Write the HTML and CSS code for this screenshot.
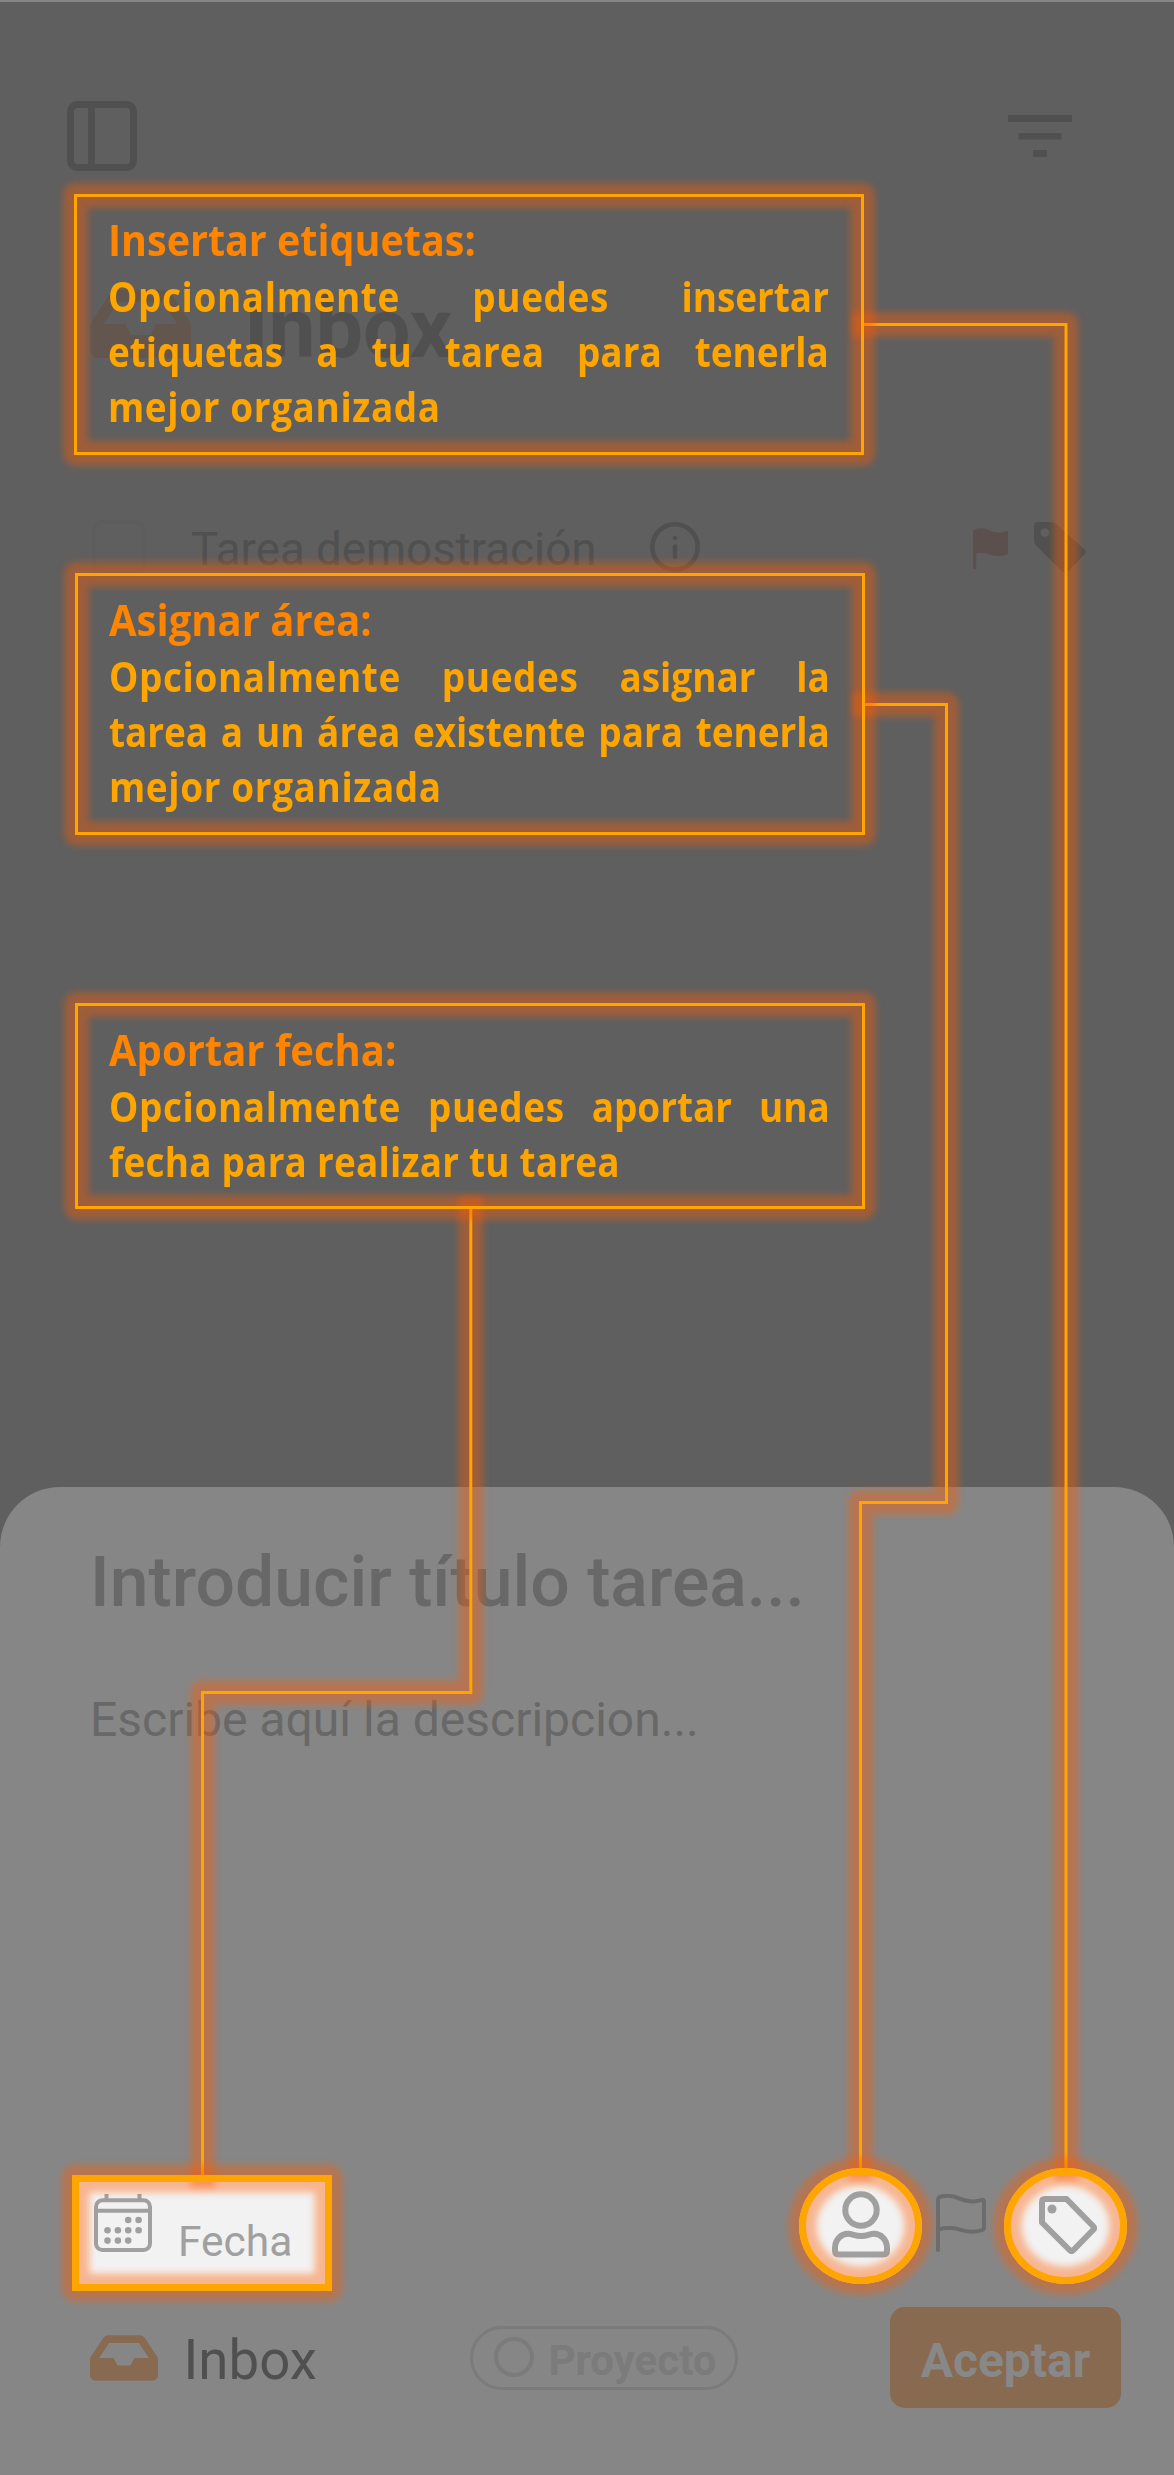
FILE: index.html
```html
<!DOCTYPE html>
<html lang="es">
<head>
<meta charset="utf-8">
<title>Inbox</title>
<link rel="stylesheet" href="styles.css">
</head>
<body>
<div class="screen">
  <header class="topbar">
    <svg class="icon-panel" viewBox="0 0 70 70"><rect x="3.5" y="3.5" width="63" height="63" rx="7"/><path d="M24.5 3v64"/></svg>
    <svg class="icon-filter" viewBox="0 0 64 42"><path d="M0 0h64v7H0zM10.500 18h43v6.500h-43zM25 35h14v7H25z"/></svg>
  </header>
  <div class="heading">
    <svg class="tray tray-big" viewBox="0 64 576 384"><path d="M567.938 243.908L462.25 85.374A48.003 48.003 0 0 0 422.311 64H153.689a48 48 0 0 0-39.938 21.374L8.062 243.908A47.994 47.994 0 0 0 0 270.533V400c0 26.51 21.49 48 48 48h480c26.51 0 48-21.49 48-48V270.533a47.994 47.994 0 0 0-8.062-26.625zM162.252 128h251.497l85.333 128H376l-32 64H232l-32-64H76.918l85.334-128z"/></svg>
    <h1>Inbox</h1>
  </div>
  <div class="task">
    <span class="check"></span>
    <span class="task-name">Tarea demostración</span>
    <svg class="icon-info" viewBox="0 0 50 50"><circle cx="25" cy="25" r="22.700"/><path d="M25 24.500v10.500"/><circle class="dot" cx="25" cy="16" r="2.300"/></svg>
    <svg class="icon-flag" viewBox="0 0 35 41"><path d="M0 2.500C5-.5 10-.5 17 2.500s12 2.500 16.500.7Q35 2.500 35 4v21q0 1.300-1.500 1.800c-5 1.700-10 1.700-16 0S8 24 3.200 25.500V39.500a1.600 1.600 0 0 1-3.200 0z"/></svg>
    <svg class="icon-tag" viewBox="0 0 52 51"><path fill-rule="evenodd" d="M4.500 0H17q3.500 0 6 2.500L50 27q3 3 0 6L34 49.500q-3 3-6 0L2.500 24Q0 21.500 0 18V4.500Q0 0 4.500 0zM10.800 6.300a4.300 4.300 0 1 0 .01 0z"/></svg>
  </div>
  <main class="sheet">
    <div class="sheet-title">Introducir título tarea...</div>
    <div class="sheet-desc">Escribe aquí la descripcion...</div>
    <div class="tools">
      <div class="date">
        <svg class="icon-cal" viewBox="0 0 58 58"><rect x="2" y="6.200" width="54" height="49.800" rx="6.500"/><path d="M2 16.700h54M12.500 0v6M45.500 0v6"/><g class="dots"><circle cx="34.200" cy="26" r="3.300"/><circle cx="44.600" cy="26" r="3.300"/><circle cx="13.500" cy="36.300" r="3.300"/><circle cx="23.900" cy="36.300" r="3.300"/><circle cx="34.200" cy="36.300" r="3.300"/><circle cx="44.600" cy="36.300" r="3.300"/><circle cx="13.500" cy="46.600" r="3.300"/><circle cx="23.900" cy="46.600" r="3.300"/><circle cx="34.200" cy="46.600" r="3.300"/></g></svg>
        <span>Fecha</span>
      </div>
      <div class="round">
        <svg class="icon-person" viewBox="0 0 58 67"><circle cx="29" cy="19" r="15.700"/><path d="M3 59.500V57C3 48 9.500 42.800 16 42.800c4.500 0 7 2.200 13 2.200s8.500-2.200 13-2.200c6.500 0 13 5.200 13 14.200v2.500q0 4-4 4H7q-4 0-4-4z"/></svg>
      </div>
      <svg class="icon-flag-line" viewBox="0 0 50 58"><path d="M2 56V6Q2 3.500 4.500 2.700C11 1 16.500 1.700 23 4.300s13 4.200 19.500 2.500l3.500-.9Q48 5.500 48 7.500V33.500Q48 35.500 46 36.100C39.500 38.200 33 38.200 26.500 36.300S13 32.500 2 35.300"/></svg>
      <div class="round">
        <svg class="icon-tag-line" viewBox="0 0 58 58"><path d="M6 3H27.500L54 30q2 2 0 4L34.500 54q-2 2-4 0L3 26.500V6q0-3 3-3z"/><circle class="dot" cx="13" cy="13" r="4.500"/></svg>
      </div>
    </div>
    <div class="actions">
      <svg class="tray tray-small" viewBox="0 64 576 384"><path d="M567.938 243.908L462.25 85.374A48.003 48.003 0 0 0 422.311 64H153.689a48 48 0 0 0-39.938 21.374L8.062 243.908A47.994 47.994 0 0 0 0 270.533V400c0 26.51 21.49 48 48 48h480c26.51 0 48-21.49 48-48V270.533a47.994 47.994 0 0 0-8.062-26.625zM162.252 128h251.497l85.333 128H376l-32 64H232l-32-64H76.918l85.334-128z"/></svg>
      <span class="list-name">Inbox</span>
      <div class="pill"><i class="ring"></i><span>Proyecto</span></div>
      <div class="accept">Aceptar</div>
    </div>
  </main>

  <svg class="guide" viewBox="0 0 1174 2475">
    <defs>
      <filter id="soft" filterUnits="userSpaceOnUse" x="0" y="0" width="1174" height="2475"><feGaussianBlur stdDeviation="3.800"/></filter>
    </defs>
    <g class="glow"><path d="M864 324.500H1066V2168"/></g>
    <path class="wire" d="M864 324.500H1066V2168"/>
    <g class="glow"><path d="M865 704.500H946.500V1502.500H860.500V2168"/></g>
    <path class="wire" d="M865 704.500H946.500V1502.500H860.500V2168"/>
    <g class="glow"><path d="M470.800 1209V1692.500H202.500V2175"/></g>
    <path class="wire" d="M470.800 1209V1692.500H202.500V2175"/>
    <g class="glow"><rect x="75.500" y="195.500" width="787" height="258"/></g>
    <rect class="wire" x="75.500" y="195.500" width="787" height="258"/>
    <g class="glow"><rect x="76.500" y="574.500" width="787" height="259"/></g>
    <rect class="wire" x="76.500" y="574.500" width="787" height="259"/>
    <g class="glow"><rect x="76.500" y="1004.500" width="787" height="203"/></g>
    <rect class="wire" x="76.500" y="1004.500" width="787" height="203"/>
    <g class="glow wide"><rect x="75.500" y="2178.500" width="253" height="109"/></g>
    <rect class="wire thick" x="75.500" y="2178.500" width="253" height="109"/>
    <g class="glow wide"><ellipse cx="860.500" cy="2226" rx="58" ry="54.500"/></g>
    <ellipse class="wire thick" cx="860.500" cy="2226" rx="58" ry="54.500"/>
    <g class="glow wide"><ellipse cx="1065.500" cy="2226" rx="58" ry="54.500"/></g>
    <ellipse class="wire thick" cx="1065.500" cy="2226" rx="58" ry="54.500"/>
  </svg>

  <section class="note note-tags">
    <h2>Insertar etiquetas:</h2>
    <p><span class="loose">Opcionalmente</span> <span class="loose">puedes</span> insertar etiquetas a tu tarea para tenerla <span class="loose">mejor organizada</span></p>
  </section>
  <section class="note note-area">
    <h2>Asignar área:</h2>
    <p><span class="loose">Opcionalmente</span> <span class="loose">puedes</span> asignar la tarea a un área existente para tenerla <span class="loose">mejor organizada</span></p>
  </section>
  <section class="note note-date">
    <h2>Aportar fecha:</h2>
    <p><span class="loose">Opcionalmente</span> <span class="loose">puedes</span> aportar una <span class="slack">fecha para realizar tu tarea</span></p>
  </section>
</div>
</body>
</html>
```
FILE: styles.css
```css
* { box-sizing: border-box; }
body { margin: 0; background: #5f5f5f; font-family: Roboto, "Liberation Sans", sans-serif; }
svg { display: block; flex: none; }
h1, h2, p { margin: 0; }
.screen {
  position: relative;
  width: 1174px;
  height: 2475px;
  overflow: hidden;
  border-top: 2px solid #868686;
  background: #5f5f5f;
  color: #505050;
  display: flex;
  flex-direction: column;
}

.topbar {
  height: 169px;
  padding: 99px 102px 0 67px;
  display: flex;
  justify-content: space-between;
  flex: none;
}
.icon-panel { width: 70px; height: 70px; fill: none; stroke: #505050; stroke-width: 7; }
.icon-filter { width: 64px; height: 42px; margin-top: 14px; fill: #505050; }

.heading {
  height: 98px;
  margin-top: 109px;
  padding-left: 90px;
  display: flex;
  flex: none;
}
.tray-big { width: 101px; height: 68px; margin-top: 10px; fill: #62564f; }
h1 { margin-left: 53px; font-size: 84px; line-height: 98px; font-weight: 700; }

.task {
  height: 56px;
  margin-top: 142px;
  padding-left: 92px;
  display: flex;
  flex: none;
}
.check { width: 54px; height: 54px; border: 4px solid #5d5d5d; border-radius: 10px; }
.task-name { width: 403px; margin-left: 45px; font-size: 45.700px; line-height: 56px; padding-top: 2px; white-space: nowrap; }
.icon-info { width: 50px; height: 50px; margin: 2px 0 0 56px; fill: none; stroke: #505050; stroke-width: 4.600; stroke-linecap: round; }
.dot { fill: #505050; stroke: none; }
.icon-flag { width: 35px; height: 41px; margin: 8px 0 0 273px; fill: #5b504e; }
.icon-tag { width: 52px; height: 51px; margin: 2px 0 0 26px; fill: #505050; }

.sheet {
  height: 988px;
  margin-top: auto;
  padding-top: 54px;
  border-radius: 60px 60px 0 0;
  background: #868686;
  flex: none;
}
.sheet-title { padding-left: 90px; font-size: 69.700px; line-height: 82px; font-weight: 500; color: #686868; }
.sheet-desc { margin-top: 69px; padding-left: 90px; font-size: 48px; line-height: 56px; color: #686868; }

.tools { height: 123px; margin-top: 420px; padding-left: 72px; display: flex; }
.date {
  width: 260px;
  height: 116px;
  margin-top: 7px;
  padding: 19px 0 0 22px;
  display: flex;
  background: #f2f2f2;
  color: #a0a0a0;
}
.icon-cal { width: 58px; height: 58px; fill: none; stroke: #a0a0a0; stroke-width: 4; }
.dots { fill: #a0a0a0; stroke: none; }
.date span { margin: 23px 0 0 26px; font-size: 42.500px; line-height: 50px; }
.round {
  width: 123px;
  height: 116px;
  border-radius: 50%;
  background: #f2f2f2;
  display: flex;
  justify-content: center;
}
.date + .round { margin-left: 467px; }
.icon-person { width: 58px; height: 67px; margin-top: 22.500px; fill: none; stroke: #a0a0a0; stroke-width: 6; }
.icon-flag-line { width: 50px; height: 58px; margin: 26px 18px 0 14px; fill: none; stroke: #6c6c6c; stroke-width: 4; stroke-linecap: round; }
.icon-tag-line { width: 58px; height: 58px; margin: 28px 0 0 4px; fill: none; stroke: #a0a0a0; stroke-width: 6; stroke-linejoin: round; }
.icon-tag-line .dot { fill: #a0a0a0; }

.actions { height: 101px; margin-top: 16px; padding-left: 90px; display: flex; align-items: center; }
.tray-small { width: 68px; height: 46px; fill: #886a50; }
.list-name { width: 287px; padding: 6px 0 0 25.500px; font-size: 54.600px; line-height: 63px; }
.pill {
  width: 268px;
  height: 64px;
  margin-left: 25px;
  padding-left: 21px;
  display: flex;
  border: 3px solid #7b7b7b;
  border-radius: 32px;
  color: #7b7b7b;
}
.ring { width: 40px; height: 40px; margin-top: 8px; border: 4px solid #7b7b7b; border-radius: 50%; }
.pill span { margin: 3px 0 0 14.500px; font-size: 42px; line-height: 58px; font-weight: 700; }
.accept {
  width: 231px;
  height: 101px;
  margin-left: 152px;
  padding-top: 3px;
  border-radius: 15px;
  background: #886a50;
  color: #888;
  font-size: 48px;
  line-height: 101px;
  font-weight: 700;
  text-align: center;
}

.guide { position: absolute; left: 0; top: -2px; width: 1174px; height: 2475px; }
.guide .glow { fill: none; stroke: #ff5c00; stroke-width: 24.500; stroke-linejoin: round; stroke-linecap: square; opacity: .4; filter: url(#soft); }
.guide .wide { stroke-width: 28; }
.wire { fill: none; stroke: #ffa500; stroke-width: 3; }
.thick { stroke-width: 7; }

/* Callout copy sits over the dimmed screen, inside the frames of .guide */
.note { position: absolute; left: 108px; width: 720px; font-family: "Open Sans", "Noto Sans", sans-serif; font-weight: 700; }
.note-tags { top: 209px; }
.note-area { top: 589px; left: 109px; }
.note-date { top: 1019px; left: 109px; }
.note h2 { font-size: 43px; line-height: 57px; color: #ff8400; transform: scaleX(.93); transform-origin: 0 0; white-space: nowrap; }
.note-tags h2 { transform: scaleX(.918); }
.note p { width: 801px; margin-top: 1px; font-size: 41px; line-height: 55px; color: #ffa500; text-align: justify; transform: scaleX(.9); transform-origin: 0 0; }
.loose { letter-spacing: .7px; }
.slack { letter-spacing: .25px; }
```
